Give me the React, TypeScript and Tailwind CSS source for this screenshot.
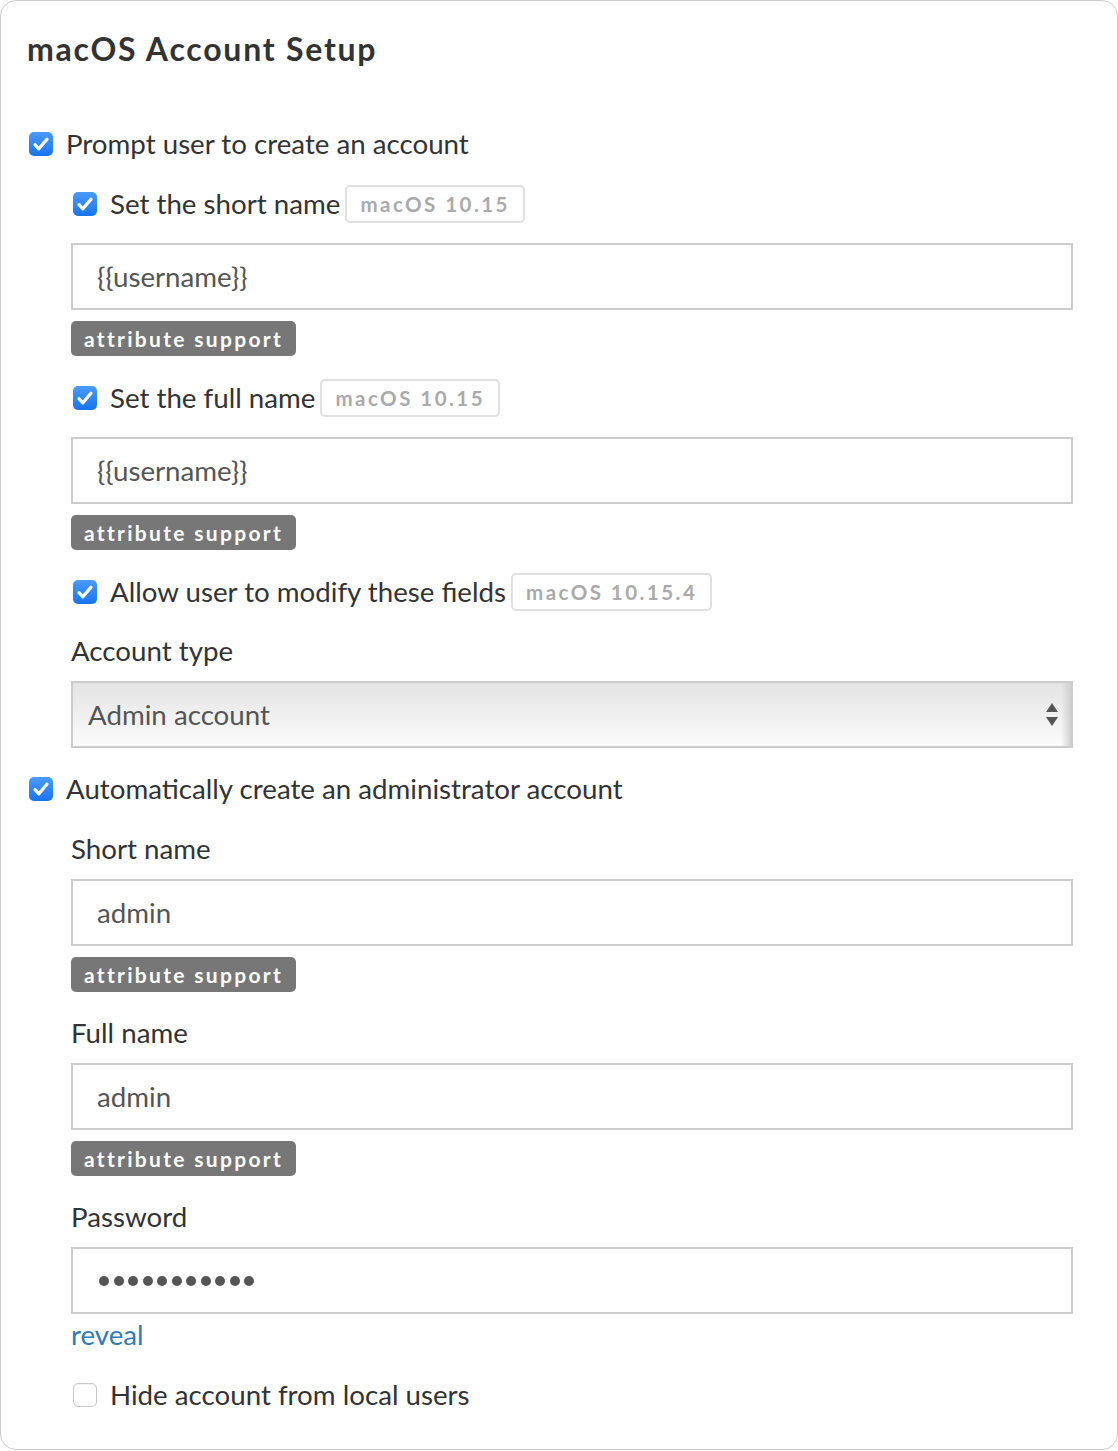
import React from 'react';

const Check = ({ checked }: { checked: boolean }) =>
  checked ? (
    <span className="flex h-[24px] w-[24px] shrink-0 items-center justify-center rounded-[5px] bg-gradient-to-b from-[#4a9bff] to-[#1673f0]">
      <svg viewBox="0 0 24 24" className="h-[22px] w-[22px]" fill="none" stroke="white" strokeWidth="3.6" strokeLinecap="round" strokeLinejoin="round">
        <path d="M5.5 12.8l4.2 4.4L18.5 6.8" />
      </svg>
    </span>
  ) : (
    <span className="block h-[24px] w-[24px] shrink-0 rounded-[5px] border border-[#c8c8c8] bg-white shadow-[inset_0_1px_1px_rgba(0,0,0,0.06)]" />
  );

const Version = ({ text }: { text: string }) => (
  <span className="ml-[5px] flex h-[38px] items-center rounded-[5px] border-2 border-[#e0e0e0] px-[13px] text-[20.5px] font-bold tracking-[0.12em] text-[#aaaaaa]">
    {text}
  </span>
);

const Attr = () => (
  <div className="mt-[11px] flex h-[35px] w-fit items-center rounded-[5px] bg-[#777777] px-[13px] text-[21px] font-bold tracking-[0.11em] text-white">
    attribute support
  </div>
);

const Field = ({ value, className = '' }: { value: string; className?: string }) => (
  <div className={`flex h-[67px] items-center border-2 border-[#cccccc] bg-white pl-[24px] text-[27.7px] text-[#555555] ${className}`}>
    {value}
  </div>
);

const Row = ({ checked, label, version, className = '' }: { checked: boolean; label: string; version?: string; className?: string }) => (
  <label className={`flex h-[40px] items-center ${className}`}>
    <span className="ml-[2px] mr-[13px] flex">
      <Check checked={checked} />
    </span>
    <span className="text-[27.7px] text-[#333333]">{label}</span>
    {version && <Version text={version} />}
  </label>
);

const Label = ({ text, className = '' }: { text: string; className?: string }) => (
  <div className={`flex h-[40px] items-center text-[27.7px] text-[#333333] ${className}`}>{text}</div>
);

export default function App() {
  return (
    <div className="min-h-screen bg-white font-[Lato,sans-serif]">
      <div className="h-[1450px] rounded-[16px] border border-[#cccccc] bg-white pl-[26px] pr-[44px] pt-[28px]">
        <h1 className="flex h-[40px] items-center text-[32px] font-bold tracking-[0.055em] text-[#333333]">macOS Account Setup</h1>

        <Row checked label="Prompt user to create an account" className="mt-[55px]" />

        <div className="ml-[44px]">
          <Row checked label="Set the short name" version="macOS 10.15" className="mt-[20px]" />
          <Field value="{{username}}" className="mt-[19px]" />
          <Attr />

          <Row checked label="Set the full name" version="macOS 10.15" className="mt-[22px]" />
          <Field value="{{username}}" className="mt-[19px]" />
          <Attr />

          <Row checked label="Allow user to modify these fields" version="macOS 10.15.4" className="mt-[22px]" />

          <Label text="Account type" className="mt-[19px]" />
          <div className="relative mt-[10px] flex h-[67px] items-center border-2 border-[#cccccc] bg-gradient-to-b from-[#e4e4e4] to-[#fbfbfb] pl-[15px] text-[27.7px] text-[#555555]">
            Admin account
            <div className="absolute right-0 top-0 h-full w-[10px] bg-gradient-to-r from-transparent to-[#d0d0d0]" />
            <svg viewBox="0 0 14 28" className="absolute right-[12px] top-1/2 h-[28px] w-[14px] -translate-y-1/2" fill="#555555">
              <path d="M7 2L13 11H1z" />
              <path d="M1 16h12l-6 9z" />
            </svg>
          </div>
        </div>

        <Row checked label="Automatically create an administrator account" className="mt-[21px]" />

        <div className="ml-[44px]">
          <Label text="Short name" className="mt-[20px]" />
          <Field value="admin" className="mt-[10px]" />
          <Attr />

          <Label text="Full name" className="mt-[21px]" />
          <Field value="admin" className="mt-[10px]" />
          <Attr />

          <Label text="Password" className="mt-[21px]" />
          <div className="mt-[10px] flex h-[67px] items-center gap-[4.5px] border-2 border-[#cccccc] bg-white pl-[26px]">
            {Array.from({ length: 11 }).map((_, i) => (
              <span key={i} className="h-[10px] w-[10px] rounded-full bg-[#555555]" />
            ))}
          </div>
          <a className="mt-[6px] block h-[30px] text-[27.7px] leading-[30px] text-[#337ab7]">reveal</a>

          <Row checked={false} label="Hide account from local users" className="mt-[25px]" />
        </div>
      </div>
    </div>
  );
}
